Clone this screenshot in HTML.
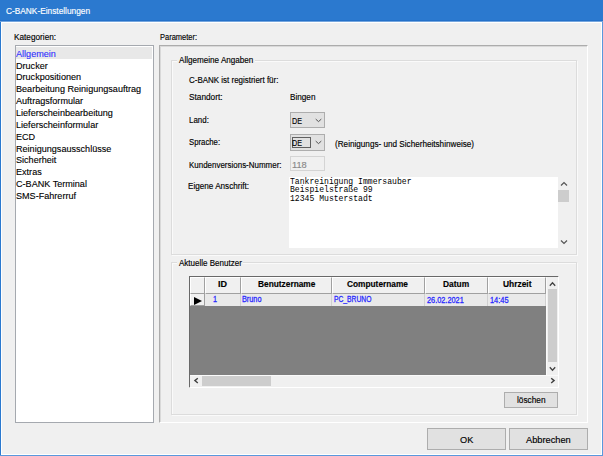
<!DOCTYPE html>
<html><head><meta charset="utf-8">
<style>
*{margin:0;padding:0;box-sizing:border-box}
html,body{width:603px;height:456px;overflow:hidden;background:#f0f0f0;font-family:"Liberation Sans",sans-serif;color:#000}
.a{position:absolute}
.t{position:absolute;white-space:nowrap;line-height:12px;transform-origin:0 0;-webkit-text-stroke:0.15px currentColor}
.bd{position:absolute;background:#2b79cf}
.list{left:15px;top:45px;width:139px;height:378px;background:#fff;border:1px solid #a5a9af}
.panel{left:159px;top:45px;width:429px;height:378px;border-top:1px solid #acacac;border-left:1px solid #acacac;border-right:1px solid #fff;border-bottom:1px solid #fff}
.panel2{left:160px;top:46px;width:427px;height:376px;border-top:1px solid #d9d9d9;border-left:1px solid #d9d9d9}
.grp{border:1px solid #dcdcdc}
.grpw{border:1px solid #fafafa}
.combo{background:#e1e1e1;border:1px solid #adadad}
.btn{background:#e1e1e1;border:1px solid #adadad}
.hc{top:277px;height:17px;background:#f0f0f0;border-top:1px solid #fff;border-left:1px solid #fff;border-right:1px solid #a0a0a0;border-bottom:1px solid #a0a0a0}
.vl{position:absolute;top:294px;width:1px;height:12px;background:#d0d0d0}

</style></head><body>
<div class="bd" style="left:0;top:0;width:603px;height:22px"></div>
<div class="a" style="left:0;top:20px;width:603px;height:1px;background:#2370c9"></div>
<div class="a" style="left:0;top:21px;width:603px;height:1px;background:#75a6de"></div>
<div class="bd" style="left:0;top:22px;width:1px;height:434px"></div>
<div class="bd" style="left:602px;top:22px;width:1px;height:434px;background:#5a98dc"></div>
<div class="bd" style="left:0;top:455px;width:603px;height:1px;background:#5a98dc"></div>
<div class="a" style="left:1px;top:22px;width:1px;height:433px;background:#fff"></div>
<div class="a" style="left:601px;top:22px;width:1px;height:433px;background:#fff"></div>
<div class="a" style="left:1px;top:454px;width:601px;height:1px;background:#fff"></div>
<div class="a" style="left:1px;top:22px;width:601px;height:1px;background:#fff"></div>

<div class="a list"></div>
<div class="a" style="left:16px;top:47px;width:136px;height:12px;background:#e8e8e8"></div>

<div class="a panel"></div>
<div class="a panel2"></div>

<div class="a grpw" style="left:172px;top:61px;width:406px;height:195px"></div>
<div class="a grp" style="left:171px;top:60px;width:406px;height:195px"></div>
<div class="a" style="left:177px;top:58px;width:78px;height:5px;background:#f0f0f0"></div>

<div class="a combo" style="left:290px;top:112px;width:35px;height:16px"></div>
<svg class="a" style="left:314px;top:117px" width="9" height="6"><path d="M1.7 2.1 L4.5 4.6 L7.3 2.1" fill="none" stroke="#444" stroke-width="0.9"/></svg>
<div class="a combo" style="left:290px;top:134px;width:35px;height:17px"></div>
<div class="a" style="left:292px;top:137px;width:18.5px;height:11px;border:1px solid #606060"></div>
<svg class="a" style="left:314px;top:139px" width="9" height="6"><path d="M1.7 2.1 L4.5 4.6 L7.3 2.1" fill="none" stroke="#444" stroke-width="0.9"/></svg>

<div class="a" style="left:290px;top:156px;width:35px;height:15px;border:1px solid #d4d4d4;background:#f0f0f0"></div>

<div class="a" style="left:289px;top:177px;width:270px;height:71px;background:#fff"></div>
<div class="a" style="left:290px;top:178px;font-family:'Liberation Mono',monospace;font-size:9px;line-height:8.45px;white-space:pre;transform:scaleX(0.9);transform-origin:0 0">Tankreinigung Immersauber
Beispielstraße 99
12345 Musterstadt</div>
<div class="a" style="left:558px;top:177px;width:11px;height:71px;background:#f0f0f0"></div>
<div class="a" style="left:558px;top:190px;width:11px;height:12px;background:#cdcdcd"></div>
<svg class="a" style="left:560px;top:181px" width="8" height="6"><path d="M1 4.5 L4 1.5 L7 4.5" fill="none" stroke="#555" stroke-width="1.2"/></svg>
<svg class="a" style="left:560px;top:239px" width="8" height="6"><path d="M1 1.5 L4 4.5 L7 1.5" fill="none" stroke="#555" stroke-width="1.2"/></svg>

<div class="a grpw" style="left:172px;top:263px;width:406px;height:153px"></div>
<div class="a grp" style="left:171px;top:262px;width:406px;height:153px"></div>
<div class="a" style="left:177px;top:260px;width:66px;height:5px;background:#f0f0f0"></div>

<div class="a" style="left:189px;top:276px;width:370px;height:112px;background:#f0f0f0;border-top:1px solid #a0a0a0;border-left:1px solid #a0a0a0;border-right:1px solid #fff;border-bottom:1px solid #fff"></div>
<div class="a" style="left:189px;top:276px;width:369px;height:1px;background:#696969"></div>
<div class="a" style="left:189px;top:276px;width:1px;height:111px;background:#696969"></div>
<div class="a hc" style="left:190px;width:15px"></div>
<div class="a hc" style="left:205px;width:36px"></div>
<div class="a hc" style="left:241px;width:91px"></div>
<div class="a hc" style="left:332px;width:93px"></div>
<div class="a hc" style="left:425px;width:63px"></div>
<div class="a hc" style="left:488px;width:58px"></div>
<div class="a" style="left:190px;top:294px;width:15px;height:12px;background:#f0f0f0;border-right:1px solid #a0a0a0;border-bottom:1px solid #a0a0a0;border-left:1px solid #fff"></div>
<div class="a" style="left:205px;top:294px;width:341px;height:12px;background:#e9e9e9"></div>
<div class="vl" style="left:240px"></div>
<div class="vl" style="left:331px"></div>
<div class="vl" style="left:424px"></div>
<div class="vl" style="left:487px"></div>
<div class="vl" style="left:545px"></div>
<svg class="a" style="left:193px;top:296px" width="10" height="10"><path d="M1 1 L9 5 L1 9 Z" fill="#000"/></svg>
<div class="a" style="left:190px;top:306px;width:356px;height:69px;background:#808080"></div>
<div class="a" style="left:546px;top:277px;width:12px;height:98px;background:#f0f0f0;border-left:1px solid #fafafa"></div>
<div class="a" style="left:548px;top:289px;width:9px;height:73px;background:#cdcdcd"></div>
<svg class="a" style="left:549px;top:281px" width="7" height="6"><path d="M0.8 4.8 L3.5 1.8 L6.2 4.8" fill="none" stroke="#444" stroke-width="1.3"/></svg>
<svg class="a" style="left:549px;top:366px" width="7" height="6"><path d="M0.8 1.2 L3.5 4.2 L6.2 1.2" fill="none" stroke="#444" stroke-width="1.3"/></svg>
<div class="a" style="left:190px;top:375px;width:368px;height:12px;background:#f0f0f0;border-top:1px solid #fafafa"></div>
<div class="a" style="left:202px;top:376px;width:69px;height:10px;background:#cdcdcd"></div>
<svg class="a" style="left:193px;top:377px" width="6" height="7"><path d="M4.8 1.2 L1.9 3.6 L4.8 6" fill="none" stroke="#404040" stroke-width="1.4"/></svg>
<svg class="a" style="left:550px;top:377px" width="6" height="7"><path d="M1.2 1.2 L4.1 3.6 L1.2 6" fill="none" stroke="#404040" stroke-width="1.4"/></svg>

<div class="a btn" style="left:504px;top:392px;width:54px;height:16px"></div>
<div class="a btn" style="left:427px;top:428px;width:79px;height:22px"></div>
<div class="a btn" style="left:509px;top:428px;width:79px;height:22px"></div>
<div class="t" id="title" style="left:6.14px;top:5px;font-size:9.5px;transform:scaleX(0.8749);color:#fff">C-BANK-Einstellungen</div>
<div class="t" id="kat" style="left:14.46px;top:31px;font-size:8.5px;transform:scaleX(0.9674)">Kategorien:</div>
<div class="t" id="param" style="left:160.00px;top:31px;font-size:8.5px;transform:scaleX(0.8810)">Parameter:</div>
<div class="t" id="li0" style="left:15.80px;top:48px;font-size:9px;transform:scaleX(1.0082);color:#2f2fff;-webkit-text-stroke:0.12px currentColor">Allgemein</div>
<div class="t" id="li1" style="left:15.80px;top:60px;font-size:9px;transform:scaleX(1.0082);-webkit-text-stroke:0.12px currentColor">Drucker</div>
<div class="t" id="li2" style="left:15.80px;top:71px;font-size:9px;transform:scaleX(1.0082);-webkit-text-stroke:0.12px currentColor">Druckpositionen</div>
<div class="t" id="li3" style="left:15.80px;top:83px;font-size:9px;transform:scaleX(1.0082);-webkit-text-stroke:0.12px currentColor">Bearbeitung Reinigungsauftrag</div>
<div class="t" id="li4" style="left:15.80px;top:95px;font-size:9px;transform:scaleX(1.0082);-webkit-text-stroke:0.12px currentColor">Auftragsformular</div>
<div class="t" id="li5" style="left:15.80px;top:107px;font-size:9px;transform:scaleX(1.0082);-webkit-text-stroke:0.12px currentColor">Lieferscheinbearbeitung</div>
<div class="t" id="li6" style="left:15.80px;top:119px;font-size:9px;transform:scaleX(1.0082);-webkit-text-stroke:0.12px currentColor">Lieferscheinformular</div>
<div class="t" id="li7" style="left:15.80px;top:131px;font-size:9px;transform:scaleX(1.0082);-webkit-text-stroke:0.12px currentColor">ECD</div>
<div class="t" id="li8" style="left:15.80px;top:143px;font-size:9px;transform:scaleX(1.0082);-webkit-text-stroke:0.12px currentColor">Reinigungsausschlüsse</div>
<div class="t" id="li9" style="left:15.80px;top:154px;font-size:9px;transform:scaleX(1.0082);-webkit-text-stroke:0.12px currentColor">Sicherheit</div>
<div class="t" id="li10" style="left:15.80px;top:166px;font-size:9px;transform:scaleX(1.0082);-webkit-text-stroke:0.12px currentColor">Extras</div>
<div class="t" id="li11" style="left:15.80px;top:178px;font-size:9px;transform:scaleX(1.0082);-webkit-text-stroke:0.12px currentColor">C-BANK Terminal</div>
<div class="t" id="li12" style="left:15.80px;top:190px;font-size:9px;transform:scaleX(1.0082);-webkit-text-stroke:0.12px currentColor">SMS-Fahrerruf</div>
<div class="t" id="allg" style="left:178.90px;top:54px;font-size:8.5px;transform:scaleX(0.9539)">Allgemeine Angaben</div>
<div class="t" id="cbank" style="left:189.00px;top:74px;font-size:8.5px;transform:scaleX(0.9371)">C-BANK ist registriert für:</div>
<div class="t" id="stand" style="left:189.18px;top:91px;font-size:8.5px;transform:scaleX(0.9706)">Standort:</div>
<div class="t" id="bingen" style="left:290.00px;top:91px;font-size:8.5px;transform:scaleX(0.9615)">Bingen</div>
<div class="t" id="land" style="left:189.00px;top:114px;font-size:8.5px;transform:scaleX(0.9337)">Land:</div>
<div class="t" id="sprache" style="left:189.00px;top:136px;font-size:8.5px;transform:scaleX(0.9127)">Sprache:</div>
<div class="t" id="kunden" style="left:189.18px;top:159px;font-size:8.5px;transform:scaleX(0.9369)">Kundenversions-Nummer:</div>
<div class="t" id="eigene" style="left:188.46px;top:180px;font-size:8.5px;transform:scaleX(0.9565)">Eigene Anschrift:</div>
<div class="t" id="de1" style="left:292.30px;top:115px;font-size:9.5px;transform:scaleX(0.7600)">DE</div>
<div class="t" id="de2" style="left:292.30px;top:137px;font-size:9.5px;transform:scaleX(0.7600)">DE</div>
<div class="t" id="reinig" style="left:334.50px;top:138px;font-size:8.5px;transform:scaleX(0.9586)">(Reinigungs- und Sicherheitshinweise)</div>
<div class="t" id="n118" style="left:291.92px;top:159px;font-size:9.5px;transform:scaleX(0.9746);color:#888888">118</div>
<div class="t" id="akt" style="left:178.54px;top:257px;font-size:8.5px;transform:scaleX(0.9433)">Aktuelle Benutzer</div>
<div class="t" id="hID" style="left:218.00px;top:278px;font-size:8.5px;transform:scaleX(1.0588);font-weight:bold">ID</div>
<div class="t" id="hBen" style="left:257.72px;top:278px;font-size:8.5px;transform:scaleX(0.9798);font-weight:bold">Benutzername</div>
<div class="t" id="hCom" style="left:347.46px;top:278px;font-size:8.5px;transform:scaleX(0.9776);font-weight:bold">Computername</div>
<div class="t" id="hDat" style="left:443.00px;top:278px;font-size:8.5px;transform:scaleX(0.9869);font-weight:bold">Datum</div>
<div class="t" id="hUhr" style="left:502.54px;top:278px;font-size:8.5px;transform:scaleX(0.9878);font-weight:bold">Uhrzeit</div>
<div class="t" id="d1" style="left:213.20px;top:293px;font-size:8.6px;transform:scaleX(0.8500);color:#2a2aff;-webkit-text-stroke:0.3px currentColor">1</div>
<div class="t" id="dBru" style="left:242.14px;top:293px;font-size:8.6px;transform:scaleX(0.8470);color:#2a2aff;-webkit-text-stroke:0.3px currentColor">Bruno</div>
<div class="t" id="dPC" style="left:334.00px;top:293px;font-size:8.6px;transform:scaleX(0.7834);color:#2a2aff;-webkit-text-stroke:0.3px currentColor">PC_BRUNO</div>
<div class="t" id="dDat" style="left:426.86px;top:294px;font-size:8.6px;transform:scaleX(0.8534);color:#2a2aff;-webkit-text-stroke:0.3px currentColor">26.02.2021</div>
<div class="t" id="dTim" style="left:489.50px;top:294px;font-size:8.6px;transform:scaleX(0.8624);color:#2a2aff;-webkit-text-stroke:0.3px currentColor">14:45</div>
<div class="t" id="losch" style="left:517.00px;top:394px;font-size:8.5px;transform:scaleX(0.9730)">löschen</div>
<div class="t" id="ok" style="left:459.50px;top:434px;font-size:9px;transform:scaleX(1.0202)">OK</div>
<div class="t" id="abbr" style="left:526.00px;top:434px;font-size:9px;transform:scaleX(1.0281)">Abbrechen</div>
</body></html>
